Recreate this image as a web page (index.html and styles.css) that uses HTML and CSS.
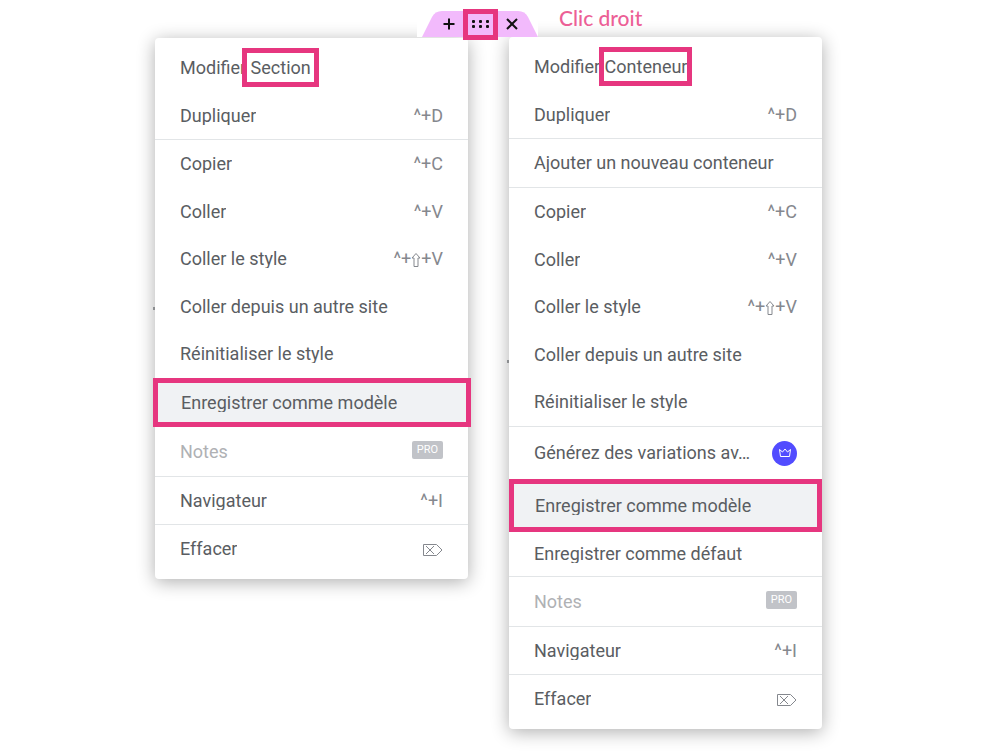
FILE: index.html
```html
<!DOCTYPE html>
<html lang="fr">
<head>
<meta charset="utf-8">
<meta name="viewport" content="width=device-width, initial-scale=1">
<title>Menus contextuels</title>
<link rel="stylesheet" href="styles.css">
</head>
<body>
<svg class="defs" width="0" height="0" aria-hidden="true">
  <symbol id="shift" viewBox="0 0 10 16"><path d="M5 1.500L9 6H7V14.500H3V6H1Z"/></symbol>
  <symbol id="delete" viewBox="0 0 20 14"><path d="M.5 1.500H13.500L19 7L13.500 12.500H.5ZM3 3L11 11M11 3L3 11"/></symbol>
</svg>
<main class="stage">
  <header class="top">
    <div class="toolbar">
      <svg class="tab" viewBox="0 0 116 26" width="116" height="26" aria-hidden="true"><path d="M0 26L10 6Q13 0 20 0H96Q103 0 106 6L116 26Z"/></svg>
      <button class="tool" aria-label="Ajouter"><svg viewBox="0 0 12 12" width="12" height="12"><path d="M6 .5v11M.5 6h11"/></svg></button>
      <button class="tool tool-handle" aria-label="Modifier le conteneur"><svg class="dots" viewBox="0 0 18 10" width="18" height="10"><rect x="0" y="1" width="3" height="3" rx="1"/><rect x="7" y="1" width="3" height="3" rx="1"/><rect x="14" y="1" width="3" height="3" rx="1"/><rect x="0" y="6" width="3" height="3" rx="1"/><rect x="7" y="6" width="3" height="3" rx="1"/><rect x="14" y="6" width="3" height="3" rx="1"/></svg></button>
      <button class="tool" aria-label="Supprimer"><svg viewBox="0 0 12 12" width="12" height="12"><path d="M1 1l10 10M11 1L1 11"/></svg></button>
    </div>
    <p class="hint">Clic droit</p>
  </header>

  <div class="menus">
    <nav class="menu menu-section" aria-label="Section">
      <div class="group">
        <button class="item"><span>Modifier <span class="mark mark-wide">Section</span></span></button>
        <button class="item"><span class="label">Dupliquer</span><kbd>^+D</kbd></button>
      </div>
      <div class="group">
        <button class="item"><span class="label">Copier</span><kbd>^+C</kbd></button>
        <button class="item"><span class="label">Coller</span><kbd>^+V</kbd></button>
        <button class="item"><span class="label">Coller le style</span><kbd>^+<svg class="key" width="10" height="16" role="img" aria-label="Maj"><use href="#shift"/></svg>+V</kbd></button>
        <button class="item"><span class="label">Coller depuis un autre site</span></button>
        <button class="item"><span class="label">Réinitialiser le style</span></button>
        <button class="item item-active"><span class="label">Enregistrer comme modèle</span></button>
      </div>
      <div class="group group-notes group-joined">
        <button class="item" disabled><span class="label">Notes</span><span class="pro">PRO</span></button>
      </div>
      <div class="group group-single">
        <button class="item"><span class="label">Navigateur</span><kbd>^+I</kbd></button>
      </div>
      <div class="group group-single">
        <button class="item"><span class="label">Effacer</span><kbd><svg class="key" width="20" height="14" role="img" aria-label="Suppr"><use href="#delete"/></svg></kbd></button>
      </div>
    </nav>

    <nav class="menu menu-container" aria-label="Conteneur">
      <div class="group">
        <button class="item"><span>Modifier <span class="mark">Conteneur</span></span></button>
        <button class="item"><span class="label">Dupliquer</span><kbd>^+D</kbd></button>
      </div>
      <div class="group">
        <button class="item"><span class="label">Ajouter un nouveau conteneur</span></button>
      </div>
      <div class="group">
        <button class="item"><span class="label">Copier</span><kbd>^+C</kbd></button>
        <button class="item"><span class="label">Coller</span><kbd>^+V</kbd></button>
        <button class="item"><span class="label">Coller le style</span><kbd>^+<svg class="key" width="10" height="16" role="img" aria-label="Maj"><use href="#shift"/></svg>+V</kbd></button>
        <button class="item"><span class="label">Coller depuis un autre site</span></button>
        <button class="item"><span class="label">Réinitialiser le style</span></button>
      </div>
      <div class="group">
        <button class="item item-promo"><span class="label">Générez des variations av…</span><span class="crown"><svg viewBox="0 0 14 10" width="14" height="10"><path d="M1.500 1.500L2.500 8.500H11.500L12.500 1.500L9.500 4L7 1L4.500 4Z"/></svg></span></button>
        <button class="item item-active"><span class="label">Enregistrer comme modèle</span></button>
        <button class="item item-short"><span class="label">Enregistrer comme défaut</span></button>
      </div>
      <div class="group group-notes">
        <button class="item" disabled><span class="label">Notes</span><span class="pro">PRO</span></button>
      </div>
      <div class="group group-single">
        <button class="item"><span class="label">Navigateur</span><kbd>^+I</kbd></button>
      </div>
      <div class="group group-single">
        <button class="item"><span class="label">Effacer</span><kbd><svg class="key" width="20" height="14" role="img" aria-label="Suppr"><use href="#delete"/></svg></kbd></button>
      </div>
    </nav>
  </div>
</main>
</body>
</html>
```
FILE: styles.css
```css
* { box-sizing: border-box; }

:root {
  --pink: #e6367f;
  --lilac: #f2bafc;
  --ink: #5a5d62;
  --muted: #85888e;
  --line: #e2e5e7;
}

body {
  margin: 0;
  padding: 0 23px 25px 0;
  background: #fff;
  color: var(--ink);
  font: 18px/18px Roboto, "Liberation Sans", sans-serif;
}

button {
  border: 0;
  padding: 0;
  background: none;
  color: inherit;
  font: inherit;
  text-align: left;
}

.defs { position: absolute; }

.stage {
  max-width: 667px;
  margin: 0 auto;
}

.top {
  display: flex;
  align-items: flex-start;
  gap: 21px;
  padding-left: 262px;
  position: relative;
  z-index: 2;
}

.toolbar {
  display: flex;
  justify-content: center;
  align-items: center;
  gap: 8px;
  width: 121px;
  height: 26px;
  margin-top: 11px;
  padding-left: 6px;
  position: relative;
  background: #fff;
}

.tab {
  position: absolute;
  right: 0;
  top: 0;
  fill: var(--lilac);
}

.tool {
  display: flex;
  align-items: center;
  justify-content: center;
  position: relative;
  width: 12px;
  height: 28px;
}

.tool svg {
  fill: none;
  stroke: #111;
  stroke-width: 2;
}

.tool .dots {
  fill: #111;
  stroke: none;
}

.tool-handle {
  flex: none;
  width: 35px;
  height: 31px;
  border: 5px solid var(--pink);
}

.hint {
  margin: 5px 0 0;
  color: #ec5f96;
  font: 500 21px/26px Lato, "Open Sans", sans-serif;
}

.menus {
  display: flex;
  align-items: flex-start;
  gap: 41px;
}

.menu {
  flex: 1;
  position: relative;
  padding: 6px 0 7px;
  background: #fff;
  border-radius: 4px;
  box-shadow: 0 3px 18px rgba(0, 0, 0, 0.32);
}

.menu-section { margin-top: 1px; }

.menu::before {
  content: "";
  position: absolute;
  left: -2px;
  top: 269px;
  width: 2px;
  height: 3px;
  background: #8b8d90;
}

.menu-container::before { top: 323px; }

.group + .group { border-top: 1px solid var(--line); }
.group + .group-joined { border-top: 0; }

.item {
  display: flex;
  align-items: center;
  justify-content: space-between;
  width: 100%;
  height: 48px;
  padding: 0 25px;
}

.item:nth-child(even),
.group-single .item { height: 47px; }
.group-notes .item { height: 49px; }
.group .item-promo { height: 52px; }
.group .item-short { height: 44px; }

.item:disabled { color: #afb1b4; }

.label {
  overflow: hidden;
  white-space: nowrap;
}

.group .item-active {
  height: 53px;
  padding: 0 21px;
  background: #f0f2f4;
  border: 5px solid var(--pink);
}

.menu-section .item-active {
  position: relative;
  width: calc(100% + 5px);
  height: 49px;
  margin: 0 -3px 0 -2px;
  padding: 0 23px;
}

kbd {
  color: var(--muted);
  font: inherit;
}

.key {
  fill: none;
  stroke: currentColor;
  stroke-width: 1;
  vertical-align: middle;
}

.mark { position: relative; }

.mark::after {
  content: "";
  position: absolute;
  inset: -9px -5px -9px -6px;
  border: 5px solid var(--pink);
}

.mark-wide::after { inset: -9px -8px -9px -9px; }

.pro {
  width: 31px;
  height: 18px;
  margin-bottom: 4px;
  border-radius: 2px;
  background: #c1c3c8;
  color: #fff;
  font-size: 11px;
  text-align: center;
}

.crown {
  display: flex;
  align-items: center;
  justify-content: center;
  width: 25px;
  height: 25px;
  border-radius: 50%;
  background: #524cff;
}

.crown svg {
  fill: none;
  stroke: #fff;
  stroke-width: 1;
  stroke-linejoin: round;
}
```
